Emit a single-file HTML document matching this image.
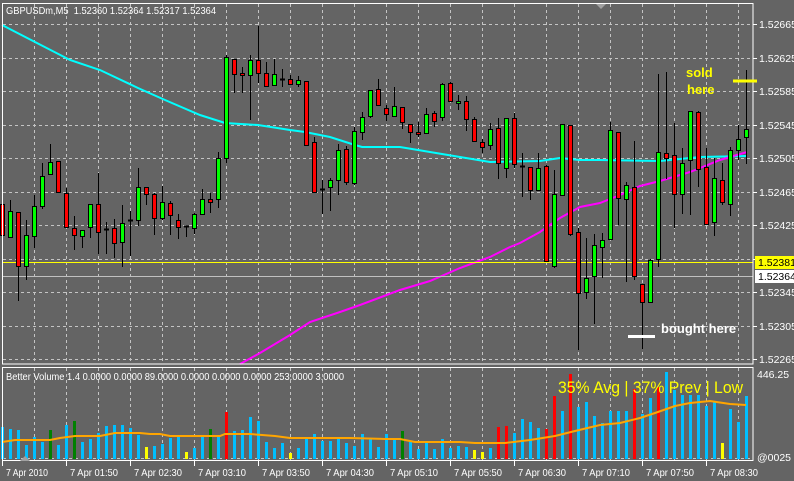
<!DOCTYPE html>
<html><head><meta charset="utf-8"><style>
html,body{margin:0;padding:0;background:#646464;}
svg{display:block}
text{font-family:"Liberation Sans",sans-serif;}
</style></head><body>
<svg id="s" width="794" height="481" viewBox="0 0 794 481" xmlns="http://www.w3.org/2000/svg">
<rect width="794" height="481" fill="#646464"/>
<g id="grid" stroke="#c4c4c4" stroke-width="1" stroke-dasharray="3,3"></g>
<polyline fill="none" stroke="#00ffff" stroke-width="2" points="2,25 35,42 70,60 100,70 138,88 165,100 200,115 225,123 258,125 290,130 305,132 330,137 355,145 362,147 400,147 430,152 460,157 490,162 540,161 560,158 580,160 600,160 660,161 700,157 747,156"/>
<polyline fill="none" stroke="#ff00ff" stroke-width="2" points="240,364 260,353 290,335 310,322 340,312 360,305 400,290 430,281 460,268 490,257 510,247 520,243 540,232 560,218 580,207 600,203 620,195 640,186 660,181 690,172 720,160 747,152"/>
<line x1="2" y1="262.5" x2="753" y2="262.5" stroke="#ffff00"/>
<line x1="2" y1="276.5" x2="753" y2="276.5" stroke="#c0c0c0"/>
<g id="candles"></g>
<g id="vol"></g>
<polyline fill="none" stroke="#ffa500" stroke-width="2" points="2,442 15,440 50,440 60,438 75,436 100,436 115,433 140,433 150,434 160,434 170,436 220,436 225,434 250,434 275,436 290,438 350,438 385,439 400,439 415,442 460,442 475,443 505,443 530,440 555,436 575,431 600,425 620,423 640,418 655,413 675,406 690,403 710,401 730,404 746,405"/>
<rect x="2.5" y="3.5" width="750.5" height="360.5" fill="none" stroke="#fff"/>
<rect x="2.5" y="367.5" width="750.5" height="93" fill="none" stroke="#fff"/>
<polygon points="596,4 606,4 601,9" fill="#a0a0a0"/>
<polygon points="20,461 30,461 25,456" fill="#a0a0a0"/>
<text x="6" y="14" font-size="10.5" fill="#fff" textLength="210" lengthAdjust="spacingAndGlyphs">GBPUSDm,M5&#160;&#160;1.52360 1.52364 1.52317 1.52364</text>
<text x="6" y="380" font-size="10.5" fill="#fff" textLength="338" lengthAdjust="spacingAndGlyphs">Better Volume 1.4 0.0000 0.0000 89.0000 0.0000 0.0000 0.0000 253.0000 3.0000</text>
<text x="558" y="393" font-size="17" fill="#ffff00" textLength="185" lengthAdjust="spacingAndGlyphs">35% Avg | 37% Prev | Low</text>
<text x="686" y="77" font-size="13" font-weight="bold" fill="#ffff00">sold</text>
<text x="687" y="94" font-size="13" font-weight="bold" fill="#ffff00">here</text>
<line x1="733" y1="81" x2="757" y2="81" stroke="#ffff00" stroke-width="3"/>
<text x="661" y="333" font-size="13" font-weight="bold" fill="#fff">bought here</text>
<line x1="628" y1="336.5" x2="655" y2="336.5" stroke="#fff" stroke-width="3"/>
<g id="axis" font-size="10.5" fill="#fff"></g>
<rect x="755" y="256" width="39" height="13" fill="#ffff00"/>
<text x="758" y="266" font-size="10.5" fill="#000">1.52381</text>
<rect x="755" y="270" width="39" height="13" fill="#fff"/>
<text x="758" y="280" font-size="10.5" fill="#000">1.52364</text>
<text x="757" y="378" font-size="10.5" fill="#fff">446.25</text>
<text x="757" y="461" font-size="10.5" fill="#fff">@0025</text>
</svg>
<script>
var NS="http://www.w3.org/2000/svg";
function el(p,t,a){var e=document.createElementNS(NS,t);for(var k in a)e.setAttribute(k,a[k]);p.appendChild(e);return e;}
var g=document.getElementById('grid');
var hy=[24,58,91,125,158,192,225,259,292,326,359];
hy.forEach(function(y){el(g,'line',{x1:3,y1:y+.5,x2:753,y2:y+.5});});
for(var x=34;x<753;x+=32){el(g,'line',{x1:x+.5,y1:4,x2:x+.5,y2:364});el(g,'line',{x1:x+.5,y1:368,x2:x+.5,y2:460});}
el(g,'line',{x1:3,y1:458.5,x2:753,y2:458.5});
var ax=document.getElementById('axis');
var pl=["1.52665","1.52625","1.52585","1.52545","1.52505","1.52465","1.52425",null,"1.52345","1.52305","1.52265"];
hy.forEach(function(y,i){el(ax,'line',{x1:753,y1:y+.5,x2:757,y2:y+.5,stroke:'#fff'});if(pl[i]){var t=el(ax,'text',{x:759,y:y+4});t.textContent=pl[i];}});
var tl=["7 Apr 2010","7 Apr 01:50","7 Apr 02:30","7 Apr 03:10","7 Apr 03:50","7 Apr 04:30","7 Apr 05:10","7 Apr 05:50","7 Apr 06:30","7 Apr 07:10","7 Apr 07:50","7 Apr 08:30"];
tl.forEach(function(s,i){var x=2+64*i;el(ax,'line',{x1:x+.5,y1:461,x2:x+.5,y2:466,stroke:'#fff'});var t=el(ax,'text',{x:x+4,y:476,textLength:i==0?42:48,lengthAdjust:'spacingAndGlyphs'});t.textContent=s;});
var C=[[204,204,235,246,'r'],[200,211,237,237,'g'],[212,212,266,300,'r'],[220,235,266,279,'g'],[195,206,236,247,'g'],[163,176,206,208,'g'],[144,162,174,174,'g'],[161,161,192,192,'r'],[188,193,227,227,'r'],[216,228,235,249,'r'],
[230,230,236,247,'g'],[204,204,227,237,'g'],[173,204,232,253,'r'],[222,229,229,253,'d'],[219,228,243,257,'r'],[205,223,242,266,'g'],[211,220,220,255,'d'],[168,187,220,225,'g'],[187,187,194,204,'r'],[193,194,218,234,'r'],
[186,202,218,219,'g'],[201,203,215,234,'r'],[214,220,227,238,'r'],[226,226,226,236,'d'],[213,214,228,233,'g'],[189,199,214,214,'g'],[193,199,202,212,'r'],[152,158,199,207,'g'],[55,57,158,162,'g'],[59,59,74,92,'r'],
[67,73,75,92,'r'],[55,60,75,119,'g'],[26,60,73,82,'r'],[62,73,86,86,'r'],[59,74,85,85,'g'],[69,79,79,86,'d'],[75,79,84,84,'r'],[76,80,84,86,'g'],[81,81,145,145,'r'],[137,142,192,192,'r'],
[180,189,189,213,'d'],[178,180,187,210,'g'],[144,150,180,194,'g'],[146,149,182,184,'r'],[127,131,183,184,'g'],[112,117,132,139,'g'],[90,90,116,117,'g'],[79,89,105,105,'r'],[105,108,114,120,'r'],[87,106,116,116,'g'],
[107,107,122,128,'r'],[124,124,132,142,'r'],[122,132,134,136,'r'],[108,114,133,133,'g'],[111,113,121,126,'r'],[83,84,117,120,'g'],[82,83,101,101,'r'],[95,101,103,109,'g'],[96,101,119,130,'r'],[117,119,141,141,'r'],
[139,142,147,152,'r'],[123,129,145,149,'g'],[118,128,163,178,'r'],[118,118,168,177,'g'],[113,118,164,167,'r'],[153,166,166,196,'d'],[167,167,190,199,'r'],[153,168,190,190,'g'],[165,166,261,261,'r'],[170,194,266,267,'g'],
[124,124,195,195,'g'],[125,125,234,235,'r'],[228,232,293,349,'r'],[238,278,292,298,'g'],[234,245,276,323,'g'],[233,240,247,277,'g'],[122,130,239,239,'g'],[132,132,198,224,'r'],[182,185,199,281,'g'],[141,187,276,279,'r'],
[284,284,302,348,'r'],[259,260,302,302,'g'],[74,152,259,266,'g'],[72,153,158,178,'r'],[123,155,194,227,'r'],[148,163,194,213,'g'],[111,111,160,214,'g'],[111,112,169,186,'r'],[148,167,224,224,'r'],[158,178,222,235,'g'],
[163,180,202,204,'r'],[147,150,204,215,'g'],[125,139,150,159,'g'],[70,129,137,163,'g']];
var cg=document.getElementById('candles');
C.forEach(function(c,i){var x=2+8*i;
el(cg,'line',{x1:x+.5,y1:c[0],x2:x+.5,y2:c[3]+1,stroke:'#000'});
if(c[4]=='d'){el(cg,'line',{x1:x-2,y1:c[1]+.5,x2:x+3,y2:c[1]+.5,stroke:'#000','stroke-width':2});}
else{var h=Math.max(c[2]-c[1],2);el(cg,'rect',{x:x-1.5,y:c[1]+.5,width:4,height:h,fill:c[4]=='g'?'#00ff00':'#ff0000',stroke:'#000'});}
});
var V=[[427,'b'],[429,'b'],[430,'b'],[445,'b'],[437,'b'],[442,'b'],[430,'k'],[445,'b'],[425,'b'],[421,'k'],
[442,'b'],[439,'b'],[433,'b'],[426,'b'],[425,'b'],[425,'b'],[428,'b'],[435,'b'],[447,'y'],[446,'b'],
[444,'b'],[438,'b'],[436,'b'],[452,'y'],[448,'b'],[437,'b'],[429,'k'],[436,'b'],[412,'r'],[431,'b'],
[430,'b'],[417,'b'],[421,'b'],[442,'b'],[448,'b'],[443,'b'],[453,'y'],[448,'b'],[439,'b'],[434,'b'],
[441,'b'],[441,'b'],[439,'b'],[443,'b'],[446,'b'],[434,'b'],[439,'b'],[447,'b'],[434,'b'],[440,'b'],
[431,'k'],[441,'b'],[449,'b'],[443,'b'],[449,'b'],[439,'b'],[448,'b'],[446,'b'],[447,'b'],[450,'y'],
[452,'y'],[448,'b'],[427,'r'],[426,'r'],[433,'b'],[419,'b'],[422,'b'],[428,'b'],[429,'r'],[396,'r'],
[411,'b'],[374,'r'],[407,'b'],[402,'b'],[416,'b'],[423,'b'],[411,'b'],[411,'b'],[411,'b'],[389,'r'],
[414,'b'],[398,'b'],[387,'r'],[372,'b'],[390,'b'],[395,'b'],[395,'b'],[395,'b'],[406,'b'],[402,'b'],
[443,'y'],[409,'b'],[422,'b'],[396,'b']];
var col={b:'#00bfff',k:'#008000',r:'#ff0000',y:'#ffff00'};
var vg=document.getElementById('vol');
V.forEach(function(v,i){var x=2+8*i;el(vg,'rect',{x:x-1,y:v[0],width:3,height:459-v[0],fill:col[v[1]]});});
</script>
</body></html>
